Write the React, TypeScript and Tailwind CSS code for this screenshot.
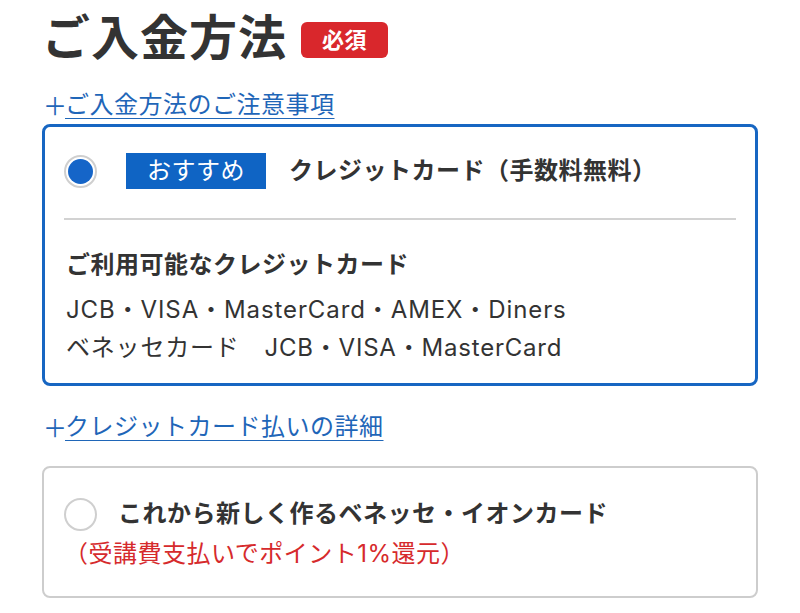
import { clsx } from "clsx";

const font = { fontFamily: 'Inter, "Noto Sans CJK JP", "Noto Sans", sans-serif' };

const Radio = ({ checked }: { checked?: boolean }) => (
  <span className="flex h-[33px] w-[33px] shrink-0 items-center justify-center rounded-full border-2 border-[#cfcfcf] bg-white">
    {checked && <span className="h-[25px] w-[25px] rounded-full bg-[#1565c8]" />}
  </span>
);

const PlusLink = ({ children, className }: { children: string; className?: string }) => (
  <div className={clsx("flex items-center text-[24px] leading-[32px] text-[#1f66b8]", className)}>
    <span className="w-[22px] font-['Noto_Sans_CJK_JP'] text-[24px] leading-[32px]">＋</span>
    <a href="#" className="underline decoration-1 underline-offset-[5px]">
      {children}
    </a>
  </div>
);

export default function App() {
  return (
    <div className="min-h-[613px] bg-white px-[42px] pt-[14px] tracking-[0.5px] text-[#333]" style={font}>
      {/* 見出し */}
      <div className="flex items-center gap-[14px]">
        <h1 className="text-[48px] font-bold leading-[48px] tracking-[1px] text-[#333]">ご入金方法</h1>
        <span className="mt-[4px] flex h-[36px] items-center rounded-[6px] bg-[#d9272c] px-[21px] text-[22px] font-bold text-white">
          必須
        </span>
      </div>

      <PlusLink className="mt-[27px] pl-[1px]">ご入金方法のご注意事項</PlusLink>

      {/* クレジットカード */}
      <div className="mt-[3px] rounded-[8px] border-[3px] border-[#1766c2] px-[19px] pt-[26px] pb-[16px]">
        <div className="flex items-center">
          <Radio checked />
          <span className="ml-[29px] bg-[#0f64c4] px-[21px] text-[24px] leading-[36px] text-white">おすすめ</span>
          <span className="ml-[23px] text-[24px] font-bold leading-[36px]">クレジットカード（手数料無料）</span>
        </div>
        <div className="mt-[29px] h-[2px] bg-[#d2d2d2]" />
        <div className="mt-[26px] px-[2px] text-[24px] leading-[38px]">
          <p className="mb-[7px] font-bold">ご利用可能なクレジットカード</p>
          <p className="tracking-[0.9px]">JCB・VISA・MasterCard・AMEX・Diners</p>
          <p className="tracking-[0.8px]">ベネッセカード　JCB・VISA・MasterCard</p>
        </div>
      </div>

      <PlusLink className="mt-[25px] pl-[1px]">クレジットカード払いの詳細</PlusLink>

      {/* ベネッセ・イオンカード */}
      <div className="mt-[23px] rounded-[8px] border-2 border-[#cdcdcd] px-[20px] pt-[28px] pb-[24px]">
        <div className="flex items-center">
          <Radio />
          <span className="ml-[21px] text-[24px] font-bold leading-[36px]">これから新しく作るベネッセ・イオンカード</span>
        </div>
        <p className="mt-[4px] text-[24px] leading-[36px] text-[#d62a2c]">（受講費支払いでポイント1%還元）</p>
      </div>
    </div>
  );
}
